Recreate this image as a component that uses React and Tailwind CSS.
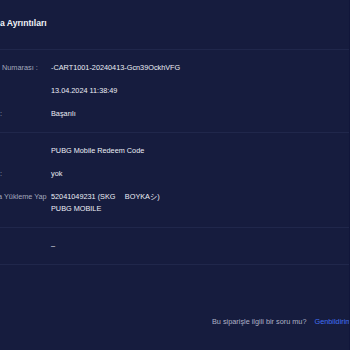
import React from 'react';

// Satır verileri (ekranda görünen kısımlar)
const rowsTop = [
  { label: '\u00a0Numarası :', value: '-CART1001-20240413-Gcn39OckhVFG' },
  { label: '', value: '13.04.2024 11:38:49' },
  { label: ':', value: 'Başarılı' },
];

const rowsMid = [
  { label: '', value: 'PUBG Mobile Redeem Code' },
  { label: ':', value: 'yok' },
];

const Row = ({ label, children }) => (
  <div className="flex py-[6px] leading-[11px]">
    <div className="w-[51px] shrink-0 overflow-hidden whitespace-nowrap text-[#a3a8bd]">{label}</div>
    <div className="whitespace-nowrap text-[#eceef5]">{children}</div>
  </div>
);

export default function App() {
  return (
    <div className="w-[350px] h-[350px] overflow-hidden bg-[#161c3e] border-r border-[#11163a] font-['Liberation_Sans','Noto_Sans_CJK_JP',sans-serif] text-[7.3px]">
      {/* başlık */}
      <div className="h-[50px] border-b border-[#20274b] pt-[17px]">
        <h2 className="text-[8.6px] font-bold leading-[12px] text-[#f1f2f7] whitespace-nowrap">a Ayrıntıları</h2>
      </div>

      <div className="pt-[6px] pb-[7px] border-b border-[#20274b]">
        {rowsTop.map((r, i) => (
          <Row key={i} label={r.label}>{r.value}</Row>
        ))}
      </div>

      <div className="pt-[6px] pb-[6px] border-b border-[#20274b]">
        {rowsMid.map((r, i) => (
          <Row key={i} label={r.label}>{r.value}</Row>
        ))}
        <div className="flex py-[6px] leading-[12px]">
          <div className="w-[51px] shrink-0 overflow-hidden whitespace-nowrap text-[#a3a8bd]">
            <span className="block -ml-[2px]">a Yükleme Yap</span>
          </div>
          <div className="whitespace-nowrap text-[#eceef5]">
            <div>52041049231 (SKG {'\u2003'}BOYKAシ)</div>
            <div>PUBG MOBILE</div>
          </div>
        </div>
      </div>

      <div className="pt-[6px] pb-[7px] border-b border-[#20274b]">
        <Row label="">–</Row>
      </div>

      <div className="mt-[51px] pl-[212px] flex gap-[8px] whitespace-nowrap leading-[11px]">
        <span className="text-[#aeb2c6]">Bu siparişle ilgili bir soru mu?</span>
        <span className="text-[#4270f4]">Genbildirim</span>
      </div>
    </div>
  );
}
